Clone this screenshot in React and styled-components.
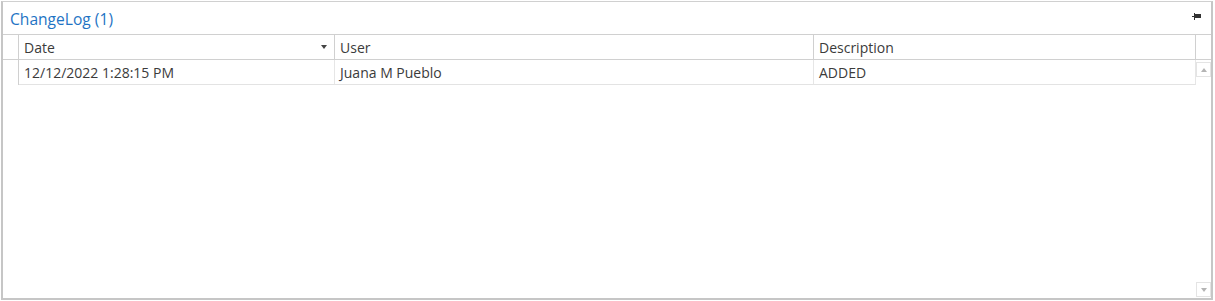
import React from "react";
import styled, { createGlobalStyle } from "styled-components";

const GlobalStyle = createGlobalStyle`
  html, body {
    margin: 0;
    padding: 0;
    background: #ffffff;
  }
  body {
    font-family: "Open Sans", "Noto Sans", sans-serif;
    color: #3b3b3b;
  }
`;

const Panel = styled.div`
  box-sizing: border-box;
  margin: 1px 0 0 1px;
  width: 1212px;
  height: 299px;
  border: 2px solid #c6c6c6;
  border-top: 1px solid #d0d0d0;
  display: flex;
  flex-direction: column;
  background: #fff;
`;

const TitleBar = styled.div`
  height: 32px;
  display: flex;
  align-items: center;
  justify-content: space-between;
  padding: 0 10px 0 7px;
  border-bottom: 1px solid #d0d0d0;
`;

const Title = styled.span`
  font-size: 15.6px;
  color: #1f74c4;
  padding-top: 1px;
`;

const PinButton = styled.span`
  display: flex;
  align-items: center;
  margin-top: -3px;
`;

const Grid = styled.div`
  flex: 1;
  display: grid;
  grid-template-columns: 16px 316px 479px 382px 15px;
  grid-template-rows: 25px 25px 1fr;
  min-height: 0;
`;

const HeadCell = styled.div`
  box-sizing: border-box;
  border-right: ${(p) => (p.$last ? "none" : "1px solid #d0d0d0")};
  border-bottom: 1px solid #d0d0d0;
  display: flex;
  align-items: center;
  justify-content: space-between;
  padding: 0 0 0 ${(p) => (p.$indicator ? 0 : 5)}px;
  font-size: 14px;
  color: #3b3b3b;
`;

const SortArrow = styled.span`
  width: 0;
  height: 0;
  border-left: 3.5px solid transparent;
  border-right: 3.5px solid transparent;
  border-top: 4px solid #444;
  margin-right: 7px;
`;

const Cell = styled.div`
  box-sizing: border-box;
  border-right: 1px solid ${(p) => (p.$indicator ? "#d0d0d0" : "#e6e6e6")};
  border-bottom: ${(p) => (p.$indicator ? "none" : "1px solid #e3e3e3")};
  display: flex;
  align-items: center;
  padding-left: ${(p) => (p.$indicator ? 0 : 5)}px;
  font-size: 14px;
  color: #3b3b3b;
  white-space: nowrap;
`;

const Scrollbar = styled.div`
  grid-column: 5;
  grid-row: 2 / span 2;
  display: flex;
  flex-direction: column;
  justify-content: space-between;
  padding: 2px 0 1px 0;
`;

const ScrollButton = styled.div`
  box-sizing: border-box;
  width: 15px;
  height: 15px;
  border: 1px solid #e4e4e4;
  display: flex;
  align-items: center;
  justify-content: center;
`;

const ScrollArrow = styled.span`
  width: 0;
  height: 0;
  border-left: 3.5px solid transparent;
  border-right: 3.5px solid transparent;
  ${(p) =>
    p.$up
      ? "border-bottom: 4px solid #b4b4b4;"
      : "border-top: 4px solid #b4b4b4;"}
`;

const Empty = styled.div`
  grid-column: 1 / span 4;
`;

const rows = [
  { date: "12/12/2022 1:28:15 PM", user: "Juana M Pueblo", description: "ADDED" },
];

const PinIcon = () => (
  <svg width="9" height="7" viewBox="0 0 9 7">
    <rect x="0" y="3" width="2" height="1" fill="#333" />
    <rect x="2" y="0" width="1" height="7" fill="#333" />
    <rect x="3" y="1" width="6" height="4" fill="#333" />
  </svg>
);

export default function App() {
  return (
    <>
      <GlobalStyle />
      <Panel>
        <TitleBar>
          <Title>ChangeLog (1)</Title>
          <PinButton>
            <PinIcon />
          </PinButton>
        </TitleBar>
        <Grid>
          <HeadCell $indicator />
          <HeadCell>
            Date
            <SortArrow />
          </HeadCell>
          <HeadCell>User</HeadCell>
          <HeadCell>Description</HeadCell>
          <HeadCell $last />
          {rows.map((row, index) => (
            <React.Fragment key={index}>
              <Cell $indicator />
              <Cell>{row.date}</Cell>
              <Cell>{row.user}</Cell>
              <Cell>{row.description}</Cell>
            </React.Fragment>
          ))}
          <Scrollbar>
            <ScrollButton>
              <ScrollArrow $up />
            </ScrollButton>
            <ScrollButton>
              <ScrollArrow />
            </ScrollButton>
          </Scrollbar>
          <Empty />
        </Grid>
      </Panel>
    </>
  );
}
